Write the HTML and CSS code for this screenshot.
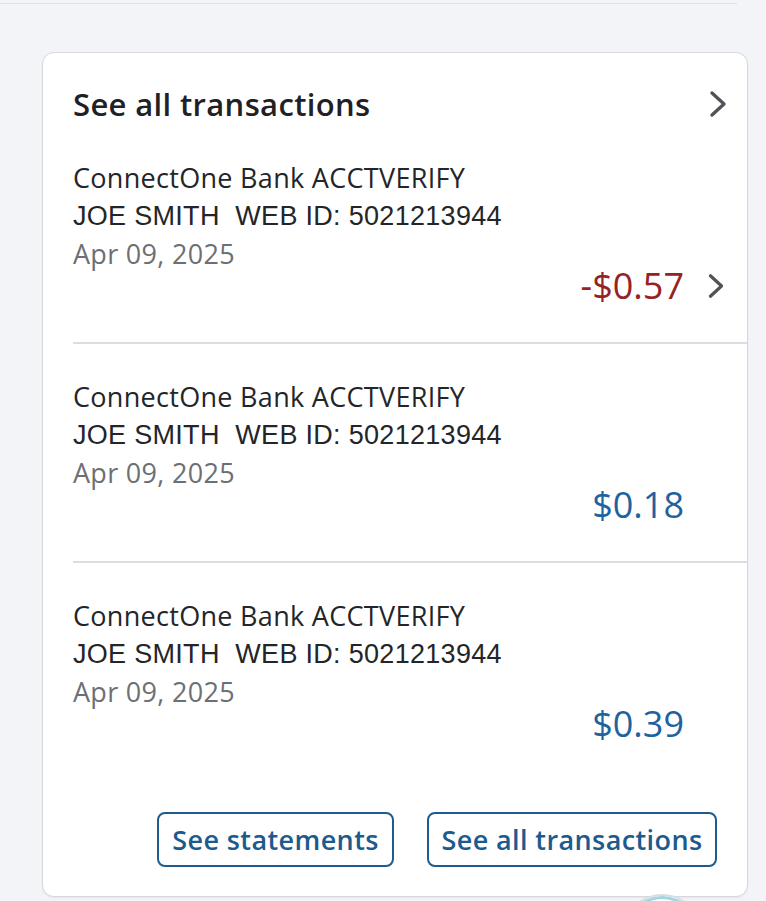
FILE: index.html
```html
<!DOCTYPE html>
<html lang="en">
<head>
<meta charset="utf-8">
<title>Transactions</title>
<link rel="stylesheet" href="styles.css">
</head>
<body>
<div class="topline"></div>
<main class="page">
  <section class="card">
    <div class="card-head">
      <h2 class="card-title">See all transactions</h2>
      <svg class="chev" viewBox="0 0 18 28" width="18" height="28"><path d="M3 3 L15 14 L3 25" fill="none" stroke="#505459" stroke-width="3.4" stroke-linecap="round" stroke-linejoin="round"/></svg>
    </div>

    <div class="txn">
      <div class="txn-line">ConnectOne Bank ACCTVERIFY</div>
      <div class="txn-line alt">JOE SMITH&nbsp;&nbsp;WEB ID: 5021213944</div>
      <div class="txn-line date">Apr 09, 2025</div>
      <div class="txn-amount-row">
        <span class="amount debit">-$0.57</span>
        <svg class="chev small" viewBox="0 0 18 28" width="18" height="26"><path d="M3 3 L15 14 L3 25" fill="none" stroke="#505459" stroke-width="3.4" stroke-linecap="round" stroke-linejoin="round"/></svg>
      </div>
    </div>

    <div class="txn">
      <div class="txn-line">ConnectOne Bank ACCTVERIFY</div>
      <div class="txn-line alt">JOE SMITH&nbsp;&nbsp;WEB ID: 5021213944</div>
      <div class="txn-line date">Apr 09, 2025</div>
      <div class="txn-amount-row">
        <span class="amount credit">$0.18</span>
        <span class="chev-space"></span>
      </div>
    </div>

    <div class="txn last">
      <div class="txn-line">ConnectOne Bank ACCTVERIFY</div>
      <div class="txn-line alt">JOE SMITH&nbsp;&nbsp;WEB ID: 5021213944</div>
      <div class="txn-line date">Apr 09, 2025</div>
      <div class="txn-amount-row">
        <span class="amount credit">$0.39</span>
        <span class="chev-space"></span>
      </div>
    </div>

    <div class="actions">
      <button class="btn btn-statements">See statements</button>
      <button class="btn btn-all">See all transactions</button>
    </div>
  </section>
</main>
<div class="fab-peek"></div>
</body>
</html>
```

FILE: styles.css
```css
* { box-sizing: border-box; }

html, body {
  margin: 0;
  padding: 0;
  overflow: hidden;
}

body {
  width: 766px;
  height: 901px;
  position: relative;
  background: #f3f4f8;
  font-family: "Open Sans", "Noto Sans", sans-serif;
  color: #222428;
}

.topline {
  height: 4px;
  width: 737px;
  border-bottom: 1px solid #dfe1e6;
}

.page {
  padding: 48px 0 0 42px;
  width: 748px;
}

.card {
  background: #ffffff;
  border: 1.5px solid #d6d8dd;
  border-radius: 12px;
  padding: 33px 0 28px 0;
  height: 845px;
  box-shadow: 0 1px 2px rgba(0, 0, 0, 0.06);
}

.card-head {
  display: flex;
  align-items: center;
  justify-content: space-between;
  padding: 0 20px 0 30px;
  margin-bottom: 3px;
}

.card-title {
  margin: 0;
  font-size: 31px;
  line-height: 36px;
  font-weight: 600;
  color: #1f2124;
  letter-spacing: 0.35px;
}

.chev { display: block; }

.txn {
  margin-left: 30px;
  padding: 34px 22px 43px 0;
  border-bottom: 2px solid #dcdde0;
}

.txn.last {
  border-bottom: none;
}

.txn-line {
  font-size: 27px;
  line-height: 38px;
  letter-spacing: 0.3px;
  color: #232529;
  white-space: nowrap;
}

.txn-line.alt {
  font-family: "Liberation Sans", Arial, sans-serif;
}

.txn-line.date {
  color: #6c7075;
}

.txn-amount-row {
  display: flex;
  justify-content: flex-end;
  align-items: center;
  gap: 23px;
  height: 26px;
}

.amount {
  font-size: 36px;
  line-height: 26px;
}

.amount.debit { color: #952326; }
.amount.credit { color: #1f62a0; }

.chev-space {
  width: 18px;
  height: 26px;
}

.actions {
  display: flex;
  justify-content: flex-end;
  gap: 33px;
  padding: 32px 30px 0 0;
}

.btn {
  font-family: "Open Sans", "Noto Sans", sans-serif;
  font-size: 27px;
  font-weight: 600;
  letter-spacing: 0.4px;
  color: #1d5a8d;
  background: #ffffff;
  border: 2px solid #1f5b8c;
  border-radius: 8px;
  height: 55px;
  padding: 0 10px;
  line-height: 50px;
  white-space: nowrap;
}

.btn-statements { width: 237px; }
.btn-all { width: 290px; }

.fab-peek {
  position: absolute;
  left: 622px;
  top: 894px;
  width: 76px;
  height: 7px;
  overflow: hidden;
}

.fab-peek::before {
  content: "";
  display: block;
  width: 76px;
  height: 76px;
  border-radius: 50%;
  border: 2px solid #d9dce2;
  box-shadow: inset 0 0 0 3px #9fd6e2;
  background: #ffffff;
}
```
